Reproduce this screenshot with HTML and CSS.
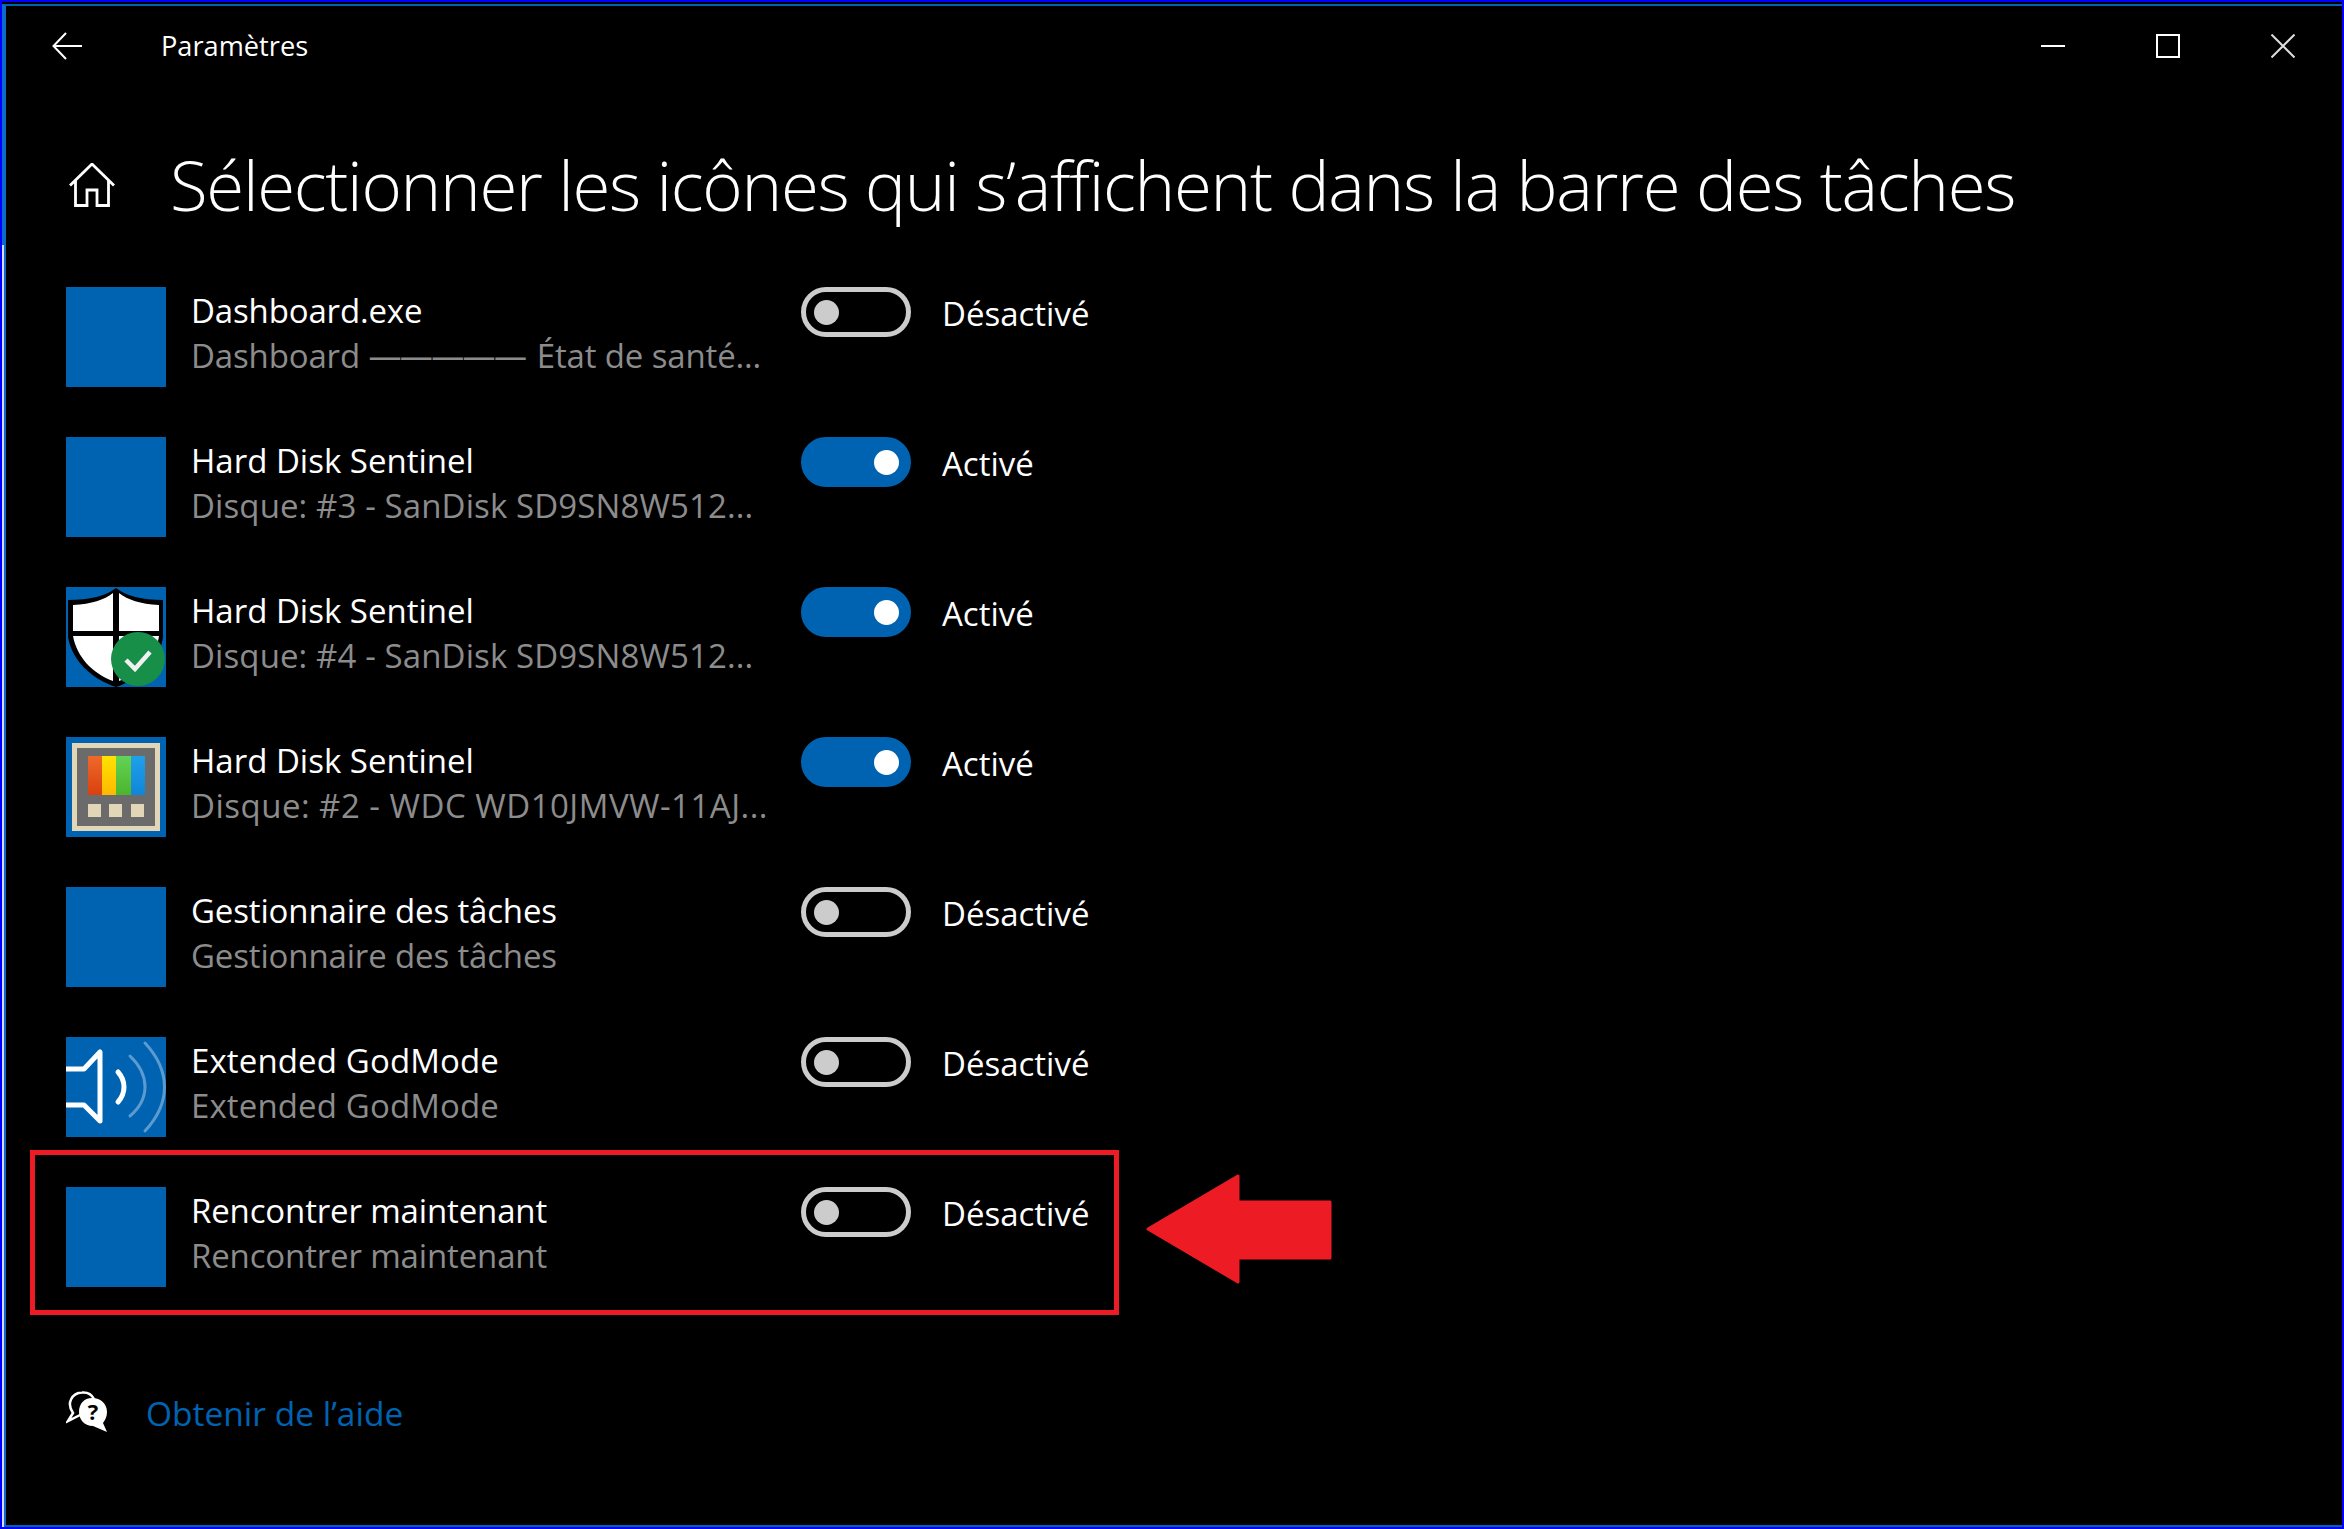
FILE: index.html
```html
<!DOCTYPE html>
<html lang="fr">
<head>
    <meta charset="UTF-8">
    <title>Paramètres</title>
    <link rel="stylesheet" href="styles.css">
</head>
<body>
<article class="window">
    <header class="titlebar">
        <svg class="back" width="30" height="28" viewBox="0 0 30 28"><path d="M14 1 1.500 14 14 27M1.500 14H30" fill="none" stroke="#fff" stroke-width="2"/></svg>
        <span class="app-name">Paramètres</span>
        <div class="controls">
            <svg width="24" height="24" viewBox="0 0 24 24"><path d="M0 12H24" stroke="#fff" stroke-width="2"/></svg>
            <svg width="24" height="24" viewBox="0 0 24 24"><rect x="1" y="1" width="22" height="22" fill="none" stroke="#fff" stroke-width="2"/></svg>
            <svg width="24" height="24" viewBox="0 0 24 24"><path d="M0.500 0.500 23.500 23.500M23.500 0.500 0.500 23.500" stroke="#ddd" stroke-width="2"/></svg>
        </div>
    </header>

    <div class="page-head">
        <svg class="home" width="46" height="44" viewBox="0 0 46 44"><path d="M1 22.500 23 1 45 22.500M6.500 17.500V42.500H18V27H28V42.500H39.500V17.500" fill="none" stroke="#fff" stroke-width="2.800"/></svg>
        <h1>Sélectionner les icônes qui s’affichent dans la barre des tâches</h1>
    </div>

    <ul class="list">
        <li class="row">
            <div class="tile"></div>
            <div class="names"><b>Dashboard.exe</b><span>Dashboard <span class="rule">—————</span> État de santé...</span></div>
            <div class="toggle"><i></i></div>
            <em>Désactivé</em>
        </li>
        <li class="row">
            <div class="tile"></div>
            <div class="names disk"><b>Hard Disk Sentinel</b><span>Disque: #3 - SanDisk SD9SN8W512...</span></div>
            <div class="toggle on"><i></i></div>
            <em>Activé</em>
        </li>
        <li class="row">
            <div class="tile">
                <svg width="100" height="100" viewBox="0 0 100 100">
                    <path d="M50 1C60 9 76 13 97 13V50C94 74 74 92 50 100C26 92 6 74 2 50V13C24 13 40 9 50 1Z" fill="#000"/>
                    <path d="M47 6C38 13 26 17 7 18V44H47ZM53 6C62 13 74 17 93 18V44H53ZM7 49H47V94C26 86 11 70 7 49ZM53 49H93C90 70 74 86 53 94Z" fill="#fff"/>
                    <circle cx="72" cy="72" r="27" fill="#178f48"/>
                    <path d="M60 73 69 82 84 65" fill="none" stroke="#f1f1f1" stroke-width="4.500"/>
                </svg>
            </div>
            <div class="names disk"><b>Hard Disk Sentinel</b><span>Disque: #4 - SanDisk SD9SN8W512...</span></div>
            <div class="toggle on"><i></i></div>
            <em>Activé</em>
        </li>
        <li class="row">
            <div class="tile">
                <svg width="100" height="100" viewBox="0 0 100 100">
                    <defs>
                        <linearGradient id="bar-orange" x1="0" y1="0" x2="0" y2="1"><stop offset="0" stop-color="#ee6a2a"/><stop offset="1" stop-color="#d9400f"/></linearGradient>
                        <linearGradient id="bar-yellow" x1="0" y1="0" x2="0" y2="1"><stop offset="0" stop-color="#ffe200"/><stop offset="1" stop-color="#fdb900"/></linearGradient>
                        <linearGradient id="bar-green" x1="0" y1="0" x2="0" y2="1"><stop offset="0" stop-color="#64d255"/><stop offset="1" stop-color="#4bb52c"/></linearGradient>
                        <linearGradient id="bar-blue" x1="0" y1="0" x2="0" y2="1"><stop offset="0" stop-color="#20a0ea"/><stop offset="1" stop-color="#0f86d8"/></linearGradient>
                    </defs>
                    <rect x="8.500" y="8.500" width="83" height="83" fill="#6b6b6b" stroke="#e2d6b8" stroke-width="5"/>
                    <rect x="22" y="19" width="14" height="39" fill="url(#bar-orange)"/>
                    <rect x="36" y="19" width="14" height="39" fill="url(#bar-yellow)"/>
                    <rect x="50" y="19" width="15" height="39" fill="url(#bar-green)"/>
                    <rect x="65" y="19" width="14" height="39" fill="url(#bar-blue)"/>
                    <rect x="22" y="67" width="13" height="13" fill="#e2d6b8"/>
                    <rect x="43" y="67" width="13" height="13" fill="#e2d6b8"/>
                    <rect x="65" y="67" width="13" height="13" fill="#e2d6b8"/>
                </svg>
            </div>
            <div class="names disk wdc"><b>Hard Disk Sentinel</b><span>Disque: #2 - WDC WD10JMVW-11AJ...</span></div>
            <div class="toggle on"><i></i></div>
            <em>Activé</em>
        </li>
        <li class="row">
            <div class="tile"></div>
            <div class="names"><b>Gestionnaire des tâches</b><span>Gestionnaire des tâches</span></div>
            <div class="toggle"><i></i></div>
            <em>Désactivé</em>
        </li>
        <li class="row">
            <div class="tile">
                <svg width="100" height="100" viewBox="0 0 100 100">
                    <path d="M0 32H18L34 15V84L18 68H0" fill="none" stroke="#fff" stroke-width="5" stroke-linejoin="round"/>
                    <path d="M52 35C60 44 60 56 52 65" fill="none" stroke="#fff" stroke-width="5" stroke-linecap="round"/>
                    <path d="M64 19C84 38 84 62 64 79" fill="none" stroke="#5b9bd0" stroke-width="3" stroke-linecap="round"/>
                    <path d="M79 6C105 34 105 66 79 94" fill="none" stroke="#5b9bd0" stroke-width="3" stroke-linecap="round"/>
                </svg>
            </div>
            <div class="names god"><b>Extended GodMode</b><span>Extended GodMode</span></div>
            <div class="toggle"><i></i></div>
            <em>Désactivé</em>
        </li>
        <li class="row">
            <div class="tile"></div>
            <div class="names"><b>Rencontrer maintenant</b><span>Rencontrer maintenant</span></div>
            <div class="toggle"><i></i></div>
            <em>Désactivé</em>
        </li>
    </ul>

    <a class="help" href="javascript:;">
        <svg width="42" height="42" viewBox="0 0 42 42">
            <path d="M16 23 2 30 7 22C0 12 6 2 16 1.500C22 1 26 4 28 8" fill="none" stroke="#fff" stroke-width="2.500"/>
            <path d="M26 7C35 7 41 13 41 21C41 26 39 29 37 32L41 41 27 35C18 35 13 28 13 21C13 13 18 7 26 7Z" fill="#fff"/>
            <text x="27" y="29" class="help-mark">?</text>
        </svg>
        <span>Obtenir de l’aide</span>
    </a>

    <!-- annotations -->
    <div class="red-box"></div>
    <svg class="red-arrow" width="186" height="112" viewBox="0 0 186 112"><path d="M2 55 92 2V28H184V84H92V108Z" fill="#ed1c24" stroke="#ed1c24" stroke-width="3" stroke-linejoin="round"/></svg>
    <div class="edge-light"></div>
</article>
</body>
</html>
```

FILE: styles.css
```css
*{padding:0;margin:0;box-sizing:border-box;}
ul,li{list-style:none;}
a{text-decoration:none;}

html,body{height:100%;background:#000;}

.window{
    position:relative;
    width:2344px;height:1529px;
    border:2px solid #0000ff;
    background:#000;
    color:#fff;
    font-family:"Open Sans","Noto Sans",sans-serif;
    overflow:hidden;
}
/* inner accent line of the window frame */
.window::before{
    content:"";
    position:absolute;
    inset:2px 0 0 0;
    border-left:4px solid #0a6cc8;
    border-bottom:2px solid #0063b1;
    border-top:2px solid #0063b1;
    pointer-events:none;
}

/* title bar */
.titlebar{
    display:flex;
    align-items:center;
    height:87px;
    padding:0 47px 0 50px;
}
.back{margin-right:79px;}
.app-name{font-size:27.200px;}
.controls{
    display:flex;
    gap:91px;
    margin-left:auto;
}

/* heading */
.page-head{
    display:flex;
    align-items:center;
    height:100px;
    margin-top:46px;
    padding-left:67px;
}
.home{margin-right:55px;}
h1{
    padding-bottom:3px;
    font-size:69px;
    font-weight:300;
    letter-spacing:-1.300px;
    white-space:nowrap;
}

/* rows */
.list{
    margin-top:52px;
    padding-left:64px;
    display:flex;
    flex-direction:column;
    gap:50px;
}
.row{
    display:flex;
    align-items:flex-start;
    height:100px;
}
.tile{
    width:100px;height:100px;
    flex:none;
    background:#0063b1;
    overflow:hidden;
}
.tile svg{display:block;}
.names{
    width:635px;
    flex:none;
    padding:1px 0 0 25px;
    display:flex;
    flex-direction:column;
    font-size:33px;
    letter-spacing:-0.150px;
    line-height:45px;
    white-space:nowrap;
}
.names b{font-weight:400;}
.names span{color:#8c8c8c;}
.names .rule{letter-spacing:-1.600px;margin-right:3px;}
.disk b{letter-spacing:0;}
.disk span{letter-spacing:0.110px;}
.wdc span{letter-spacing:0.490px;}
.god b,.god span{letter-spacing:0.130px;}
.toggle{
    position:relative;
    width:110px;height:50px;
    flex:none;
    border:5px solid #ccc;
    border-radius:25px;
}
.toggle i{
    position:absolute;
    left:8px;top:8px;
    width:25px;height:25px;
    border-radius:50%;
    background:#ccc;
}
.toggle.on{background:#0063b1;border-color:#0063b1;}
.toggle.on i{left:68px;background:#fff;}
.row em{
    margin-left:31px;
    padding-top:2px;
    font-style:normal;
    font-size:33px;
    line-height:50px;
}

/* help link */
.help{
    display:flex;
    align-items:center;
    gap:38px;
    margin-top:101px;
    padding-left:64px;
    color:#0063b1;
    font-size:33.500px;
}
.help svg{flex:none;}
.help span{padding-top:2px;}
.help-mark{
    font-size:22px;
    font-weight:700;
    fill:#000;
    text-anchor:middle;
}

/* annotations */
.red-box{
    position:absolute;
    left:28px;top:1148px;
    width:1089px;height:165px;
    border:5px solid #ed1c24;
}
.red-arrow{
    position:absolute;
    left:1144px;top:1172px;
}
.edge-light{
    position:absolute;
    left:0;top:243px;bottom:0;
    width:2px;
    background:#d8dcff;
}
```
